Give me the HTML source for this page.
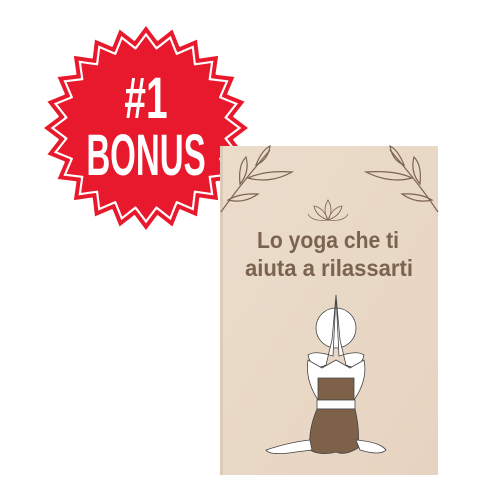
<!DOCTYPE html>
<html><head><style>
html,body{margin:0;padding:0;background:#fff;width:500px;height:500px;overflow:hidden}
</style></head><body>
<svg width="500" height="500" viewBox="0 0 500 500" xmlns="http://www.w3.org/2000/svg">
<defs>
<g id="star">
<circle r="88"/>
<g id="t6">
<polygon id="tr" points="0,-102 -12,-86 12,-86"/>
<use href="#tr" transform="rotate(15)"/>
<use href="#tr" transform="rotate(30)"/>
<use href="#tr" transform="rotate(45)"/>
<use href="#tr" transform="rotate(60)"/>
<use href="#tr" transform="rotate(75)"/>
</g>
<use href="#t6" transform="rotate(90)"/>
<use href="#t6" transform="rotate(180)"/>
<use href="#t6" transform="rotate(270)"/>
</g>
<linearGradient id="bk" x1="0" y1="0" x2="1" y2="1">
<stop offset="0" stop-color="#ebdccb"/><stop offset="1" stop-color="#e6d4c1"/>
</linearGradient>
</defs>
<g transform="translate(146,128)">
<use href="#star" fill="#e8192c"/>
<use href="#star" fill="#fff" transform="scale(0.935)"/>
<use href="#star" fill="#e8192c" transform="scale(0.9)"/>
</g>
<text x="146" y="118" text-anchor="middle" font-family="Liberation Sans, sans-serif" font-weight="bold" font-size="58" fill="#fff" transform="translate(146,0) scale(0.67,1) translate(-146,0)">#1</text>
<text x="146" y="175" text-anchor="middle" font-family="Liberation Sans, sans-serif" font-weight="bold" font-size="58" fill="#fff" transform="translate(146,0) scale(0.57,1) translate(-146,0)">BONUS</text>
<rect x="220" y="146" width="218" height="329" fill="url(#bk)"/>
<rect x="220" y="146" width="3" height="329" fill="#dccbb8"/>
<g fill="none" stroke="#7a6450" stroke-width="1.2">
<path d="M221,212 Q240,185 270,150"/>
<path d="M240,184 Q238,165 246,157 Q250,172 240,184Z"/>
<path d="M248,178 Q265,170 292,172 Q270,184 248,178Z"/>
<path d="M256,165 Q262,150 270,146 Q268,160 256,165Z"/>
<path d="M228,200 Q240,193 258,194 Q244,204 228,200Z"/>
<path d="M438,212 Q420,185 390,150"/>
<path d="M420,184 Q422,165 414,157 Q410,172 420,184Z"/>
<path d="M412,178 Q395,170 366,172 Q390,184 412,178Z"/>
<path d="M404,165 Q398,150 390,146 Q392,160 404,165Z"/>
<path d="M432,200 Q420,193 402,194 Q416,204 432,200Z"/>
<path d="M328,220 Q322,210 328,200 Q334,210 328,220Z M328,220 Q316,216 314,206 Q324,208 328,220Z M328,220 Q340,216 342,206 Q332,208 328,220Z M328,220 Q312,222 308,214 M328,220 Q344,222 348,214" stroke-width="0.8"/>
</g>
<g font-family="Liberation Sans, sans-serif" font-size="23" font-weight="bold" fill="#7a6450" text-anchor="middle">
<text x="328" y="248" textLength="142" lengthAdjust="spacingAndGlyphs">Lo yoga che ti</text>
<text x="329" y="276" textLength="168" lengthAdjust="spacingAndGlyphs">aiuta a rilassarti</text>
</g>
<g stroke="#444" stroke-width="0.8">
<ellipse cx="336" cy="328" rx="20" ry="20" fill="#fff"/>
<path d="M336,295 L332,340 L326,365 Q312,372 308,355 Q315,350 333,356 Z" fill="#fff"/>
<path d="M336,295 L340,340 L346,365 Q360,372 364,355 Q357,350 339,356 Z" fill="#fff"/>
<path d="M308,360 Q305,380 318,400 L354,400 Q368,380 364,360 L350,368 L336,360 L322,368 Z" fill="#fff"/>
<path d="M318,378 L354,378 L354,400 L318,400 Z" fill="#7d6149"/>
<rect x="317" y="400" width="38" height="9" fill="#fff"/>
<path d="M317,409 L355,409 Q360,430 358,448 Q345,456 336,452 Q320,456 310,450 Q308,430 317,409Z" fill="#7d6149"/>
<path d="M310,440 Q290,442 266,450 Q270,456 296,452 L312,450Z" fill="#fff"/>
<path d="M356,440 Q380,442 386,450 Q380,456 360,450Z" fill="#fff"/>
</g>
</svg>
</body></html>
